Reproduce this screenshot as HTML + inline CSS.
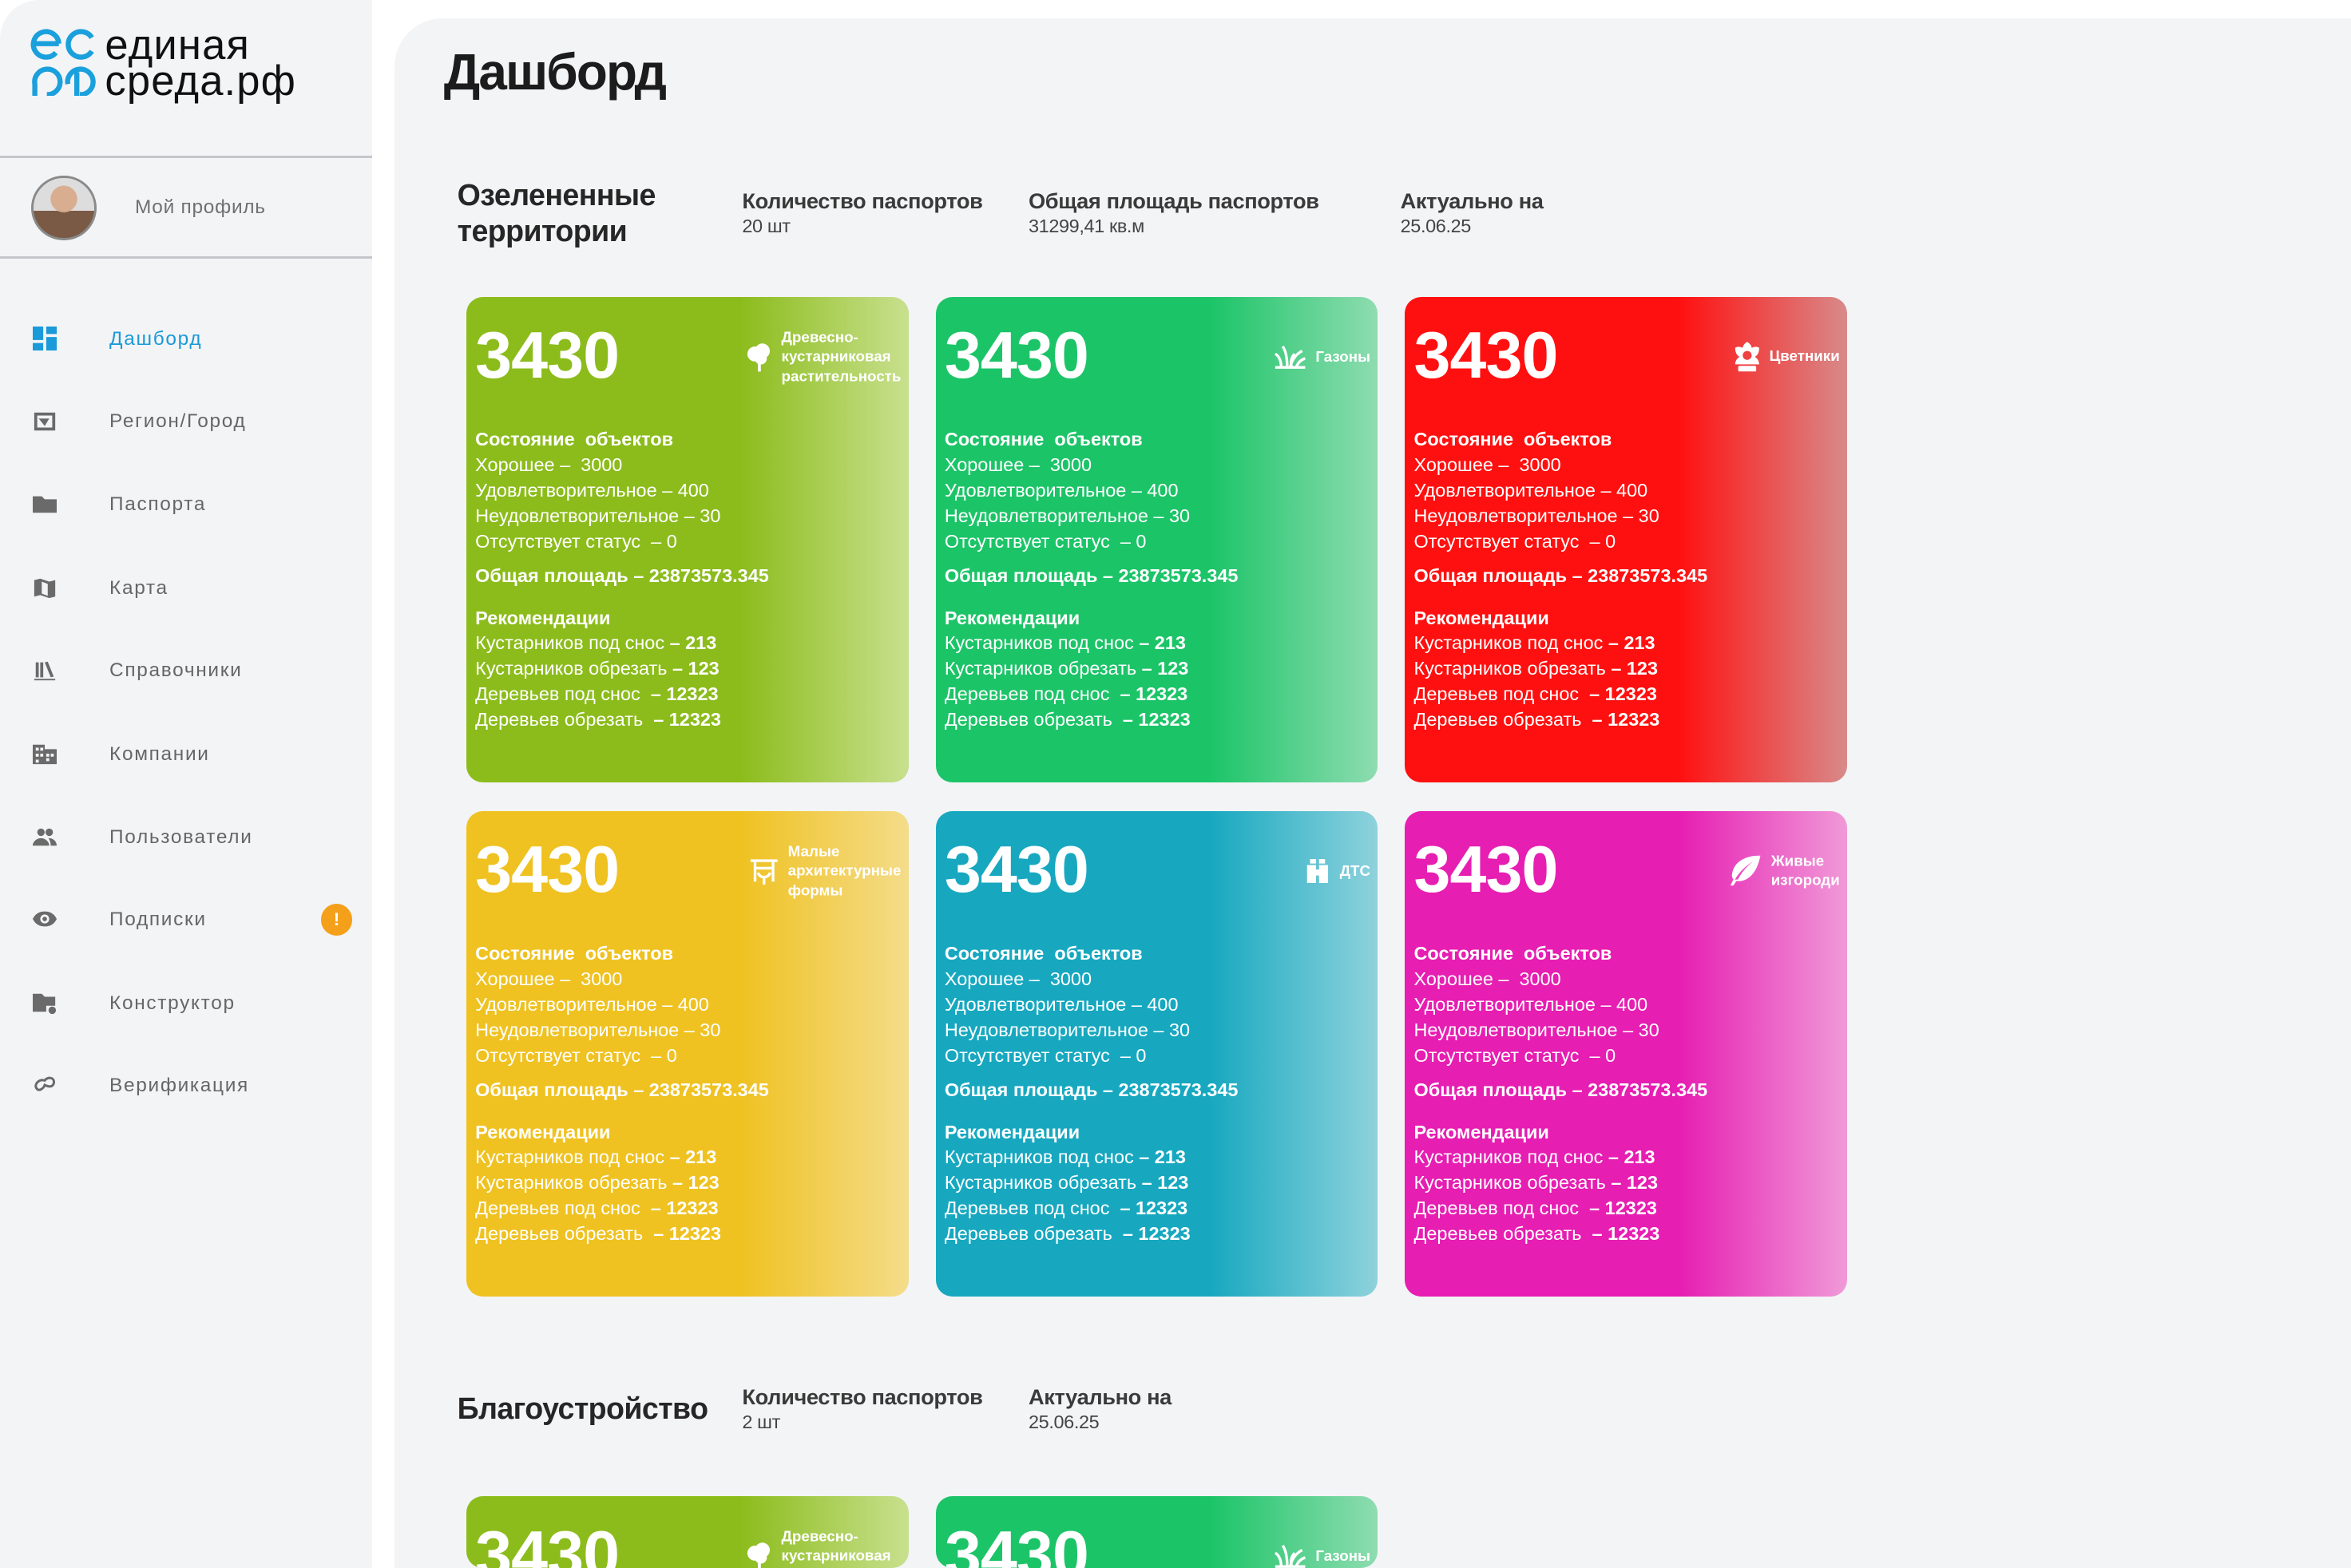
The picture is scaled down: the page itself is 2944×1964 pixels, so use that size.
<!DOCTYPE html>
<html><head><meta charset="utf-8">
<style>
html,body{margin:0;padding:0;background:#fff;}
body{width:2944px;height:1964px;overflow:hidden;font-family:"Liberation Sans","DejaVu Sans",sans-serif;}
#r{zoom:1.877551;width:1568px;height:1046px;position:relative;overflow:hidden;background:#fff;}
.side{position:absolute;left:0;top:0;width:248px;height:1046px;background:#f3f4f6;border-top-left-radius:26px;}
.main{position:absolute;left:263px;top:12px;width:1305px;height:1034px;background:#f3f4f6;border-top-left-radius:32px;}
.logo{position:absolute;left:20px;top:18px;}
.logo .t{position:absolute;left:50px;top:0px;font-size:28px;line-height:24px;color:#111;letter-spacing:0.6px;white-space:nowrap;}
.hr{position:absolute;left:0;width:248px;height:1.5px;background:#c4c6ca;}
.ava{position:absolute;left:21px;top:117px;width:40px;height:40px;border-radius:50%;border:2px solid #8a8a8a;background:radial-gradient(circle at 50% 35%,#d9ad90 0 26%,transparent 28%),linear-gradient(#ddd 0 55%,#7a5a44 55%);overflow:hidden;}
.prof{position:absolute;left:90px;top:131px;font-size:13px;color:#707070;letter-spacing:0.4px;}
.nav{position:absolute;left:0;width:248px;height:20px;}
.nav .ic{position:absolute;left:22px;top:2px;width:16px;height:16px;}
.nav .l{position:absolute;left:73px;top:3px;font-size:13px;color:#666;letter-spacing:0.9px;}
.nav.a .l{color:#1a9ad8;}
.badge{position:absolute;left:214px;top:0;width:21px;height:21px;border-radius:50%;background:#f5a01a;color:#fff;font-size:12px;font-weight:bold;text-align:center;line-height:21px;}
h1{position:absolute;left:296px;top:28px;margin:0;font-size:34px;font-weight:900;color:#1c1c1c;letter-spacing:-1px;}
.sec{position:absolute;font-size:20px;font-weight:bold;color:#262626;line-height:24px;letter-spacing:-0.3px;}
.kv{position:absolute;font-size:14px;color:#3a3a3a;line-height:16px;letter-spacing:-0.2px;}
.kv b{display:block;font-size:14.5px;}
.kv span{font-size:12.5px;color:#444;}
.card{position:absolute;width:295px;height:324px;border-radius:11px;color:#fff;overflow:hidden;}
.card .n{position:absolute;left:6px;top:14px;font-size:44px;font-weight:bold;line-height:50px;letter-spacing:-0.5px;}
.card .cat{position:absolute;right:5px;top:40px;transform:translateY(-50%);font-size:10px;font-weight:bold;line-height:13px;display:flex;align-items:center;gap:6px;}
.card .body{position:absolute;left:6px;top:87px;font-size:12.5px;line-height:17px;white-space:nowrap;}
.card .body b{font-weight:bold;}
.sp{height:6px}
.sp2{height:11px}
</style></head><body><div id="r">
<div class="side">
 <div class="logo">
  <svg width="44" height="46" viewBox="0 0 44 46" fill="none" stroke="#1aa0dc" stroke-width="3.4">
   <path d="M19 11 A8.5 8.5 0 1 0 17 17 M2.5 11 H19"/>
   <path d="M41 7 A8.5 8.5 0 1 0 41 16"/>
   <path d="M3 46 V38 A8.5 8.5 0 1 1 11 45"/>
   <path d="M31 46 V30 M33 45 A8.5 8.5 0 1 0 25 38"/>
  </svg>
  <div class="t">единая<br>среда.рф</div>
 </div>
 <div class="hr" style="top:104px"></div>
 <div class="ava"></div>
 <div class="prof">Мой профиль</div>
 <div class="hr" style="top:171px"></div>

 <div class="nav a" style="top:216px"><svg class="ic" viewBox="0 0 16 16" fill="#1a9ad8"><rect x="0" y="0" width="7" height="9"/><rect x="9" y="0" width="7" height="5"/><rect x="0" y="11" width="7" height="5"/><rect x="9" y="7" width="7" height="9"/></svg><div class="l">Дашборд</div></div>
 <div class="nav" style="top:271px"><svg class="ic" viewBox="0 0 16 16" fill="#6a6a6a"><path d="M1 2h14v12H1z M3 4v8h10V4z"/><path d="M4 6l7 0-3 5z"/></svg><div class="l">Регион/Город</div></div>
 <div class="nav" style="top:326px"><svg class="ic" viewBox="0 0 16 16" fill="#6a6a6a"><path d="M0 3h6l2 2h8v9H0z"/></svg><div class="l">Паспорта</div></div>
 <div class="nav" style="top:382px"><svg class="ic" viewBox="0 0 16 16" fill="#6a6a6a"><path d="M1 3l4-1 6 2 4-1v11l-4 1-6-2-4 1z M6 4v8l4 1.5V5.5z" fill-rule="evenodd"/></svg><div class="l">Карта</div></div>
 <div class="nav" style="top:437px"><svg class="ic" viewBox="0 0 16 16" fill="#6a6a6a"><rect x="2" y="3" width="2" height="10"/><rect x="5" y="3" width="2" height="10"/><path d="M8 3l2-0.5 4 10-2 0.5z"/><rect x="1" y="14" width="14" height="1"/></svg><div class="l">Справочники</div></div>
 <div class="nav" style="top:493px"><svg class="ic" viewBox="0 0 16 16" fill="#6a6a6a"><path d="M0 2h8v3h8v10H0z M2 4v2h2V4z M5 4v2h2V4z M2 8v2h2V8z M5 8v2h2V8z M2 12v2h2v-2z M9 8v2h2V8z M12 8v2h2V8z M9 11v2h2v-2z" fill-rule="evenodd"/></svg><div class="l">Компании</div></div>
 <div class="nav" style="top:548px"><svg class="ic" viewBox="0 0 16 16" fill="#6a6a6a"><circle cx="5.5" cy="5" r="2.5"/><circle cx="11" cy="5" r="2.5"/><path d="M0 14c0-3 3-5 5.5-5s5.5 2 5.5 5z M11 9c2.5 0 5 2 5 5h-4c0-2-0.5-3.5-1.5-5z"/></svg><div class="l">Пользователи</div></div>
 <div class="nav" style="top:603px"><svg class="ic" viewBox="0 0 16 16" fill="#6a6a6a"><path d="M0 8c2-4 5-5 8-5s6 1 8 5c-2 4-5 5-8 5s-6-1-8-5z M8 5a3 3 0 1 0 0.01 0z M8 6.5a1.5 1.5 0 1 1-0.01 0z" fill-rule="evenodd"/></svg><div class="l">Подписки</div><div class="badge">!</div></div>
 <div class="nav" style="top:659px"><svg class="ic" viewBox="0 0 16 16" fill="#6a6a6a"><path d="M0 2h6l2 2h7v6h-6v4H0z"/><circle cx="13" cy="13" r="2.5"/></svg><div class="l">Конструктор</div></div>
 <div class="nav" style="top:714px"><svg class="ic" viewBox="0 0 16 16" fill="none" stroke="#6a6a6a" stroke-width="1.6"><path d="M2 9c0-3 3-5 6-4 2-3 7-2 6 2-1 3-4 2-6 1-1 3-5 5-6 1z"/></svg><div class="l">Верификация</div></div>
</div>

<div class="main"></div>
<h1>Дашборд</h1>

<div class="sec" style="left:305px;top:118px">Озелененные<br>территории</div>
<div class="kv" style="left:495px;top:126px"><b>Количество паспортов</b><span>20 шт</span></div>
<div class="kv" style="left:686px;top:126px"><b>Общая площадь паспортов</b><span>31299,41 кв.м</span></div>
<div class="kv" style="left:934px;top:126px"><b>Актуально на</b><span>25.06.25</span></div>

<div class="sec" style="left:305px;top:928px">Благоустройство</div>
<div class="kv" style="left:495px;top:924px"><b>Количество паспортов</b><span>2 шт</span></div>
<div class="kv" style="left:686px;top:924px"><b>Актуально на</b><span>25.06.25</span></div>

<div id="cards"></div>
<script>
var cards=[
 [311,198,'#8cbc1c','#c8e08e','tree','Древесно-<br>кустарниковая<br>растительность'],
 [624,198,'#1cc468','#8edcb0','grass','Газоны'],
 [937,198,'#ff1010','#d88a8a','flower','Цветники'],
 [311,541,'#efc222','#f4dc8a','maf','Малые<br>архитектурные<br>формы'],
 [624,541,'#17a8c0','#8ed2dc','dts','ДТС'],
 [937,541,'#e61eb2','#f09ad8','leaf','Живые<br>изгороди'],
 [311,998,'#8cbc1c','#c8e08e','tree','Древесно-<br>кустарниковая<br>растительность'],
 [624,998,'#1cc468','#8edcb0','grass','Газоны']
];
var icons={
 tree:'<svg width="18" height="20" viewBox="0 0 18 20" fill="#fff"><circle cx="6" cy="8" r="5"/><circle cx="11" cy="6" r="5"/><circle cx="10" cy="11" r="4"/><rect x="8" y="11" width="2" height="9"/></svg>',
 grass:'<svg width="22" height="16" viewBox="0 0 22 16" fill="none" stroke="#fff" stroke-width="1.8"><path d="M1 15h20 M5 15C5 10 3 7 1 6 M9 15C9 9 8 4 6 1 M11 15c1-5 4-9 8-11 M15 15c1-3 3-5 6-6 M12 15c-1-4 0-7 2-9"/></svg>',
 flower:'<svg width="18" height="20" viewBox="0 0 18 20" fill="#fff"><path d="M9 0c2 1 3 3 3 4 2-1 4-1 5 0 0 3-1 5-3 6 2 1 3 3 3 5H1c0-2 1-4 3-5-2-1-3-3-3-6 1-1 3-1 5 0 0-1 1-3 3-4z M9 6a3 3 0 1 0 0.01 0z" fill-rule="evenodd"/><rect x="3" y="16" width="12" height="4" rx="1"/></svg>',
 maf:'<svg width="20" height="20" viewBox="0 0 20 20" fill="none" stroke="#fff" stroke-width="1.8"><path d="M1 3h18 M4 3v14 M16 3v14 M4 8h12 M6 11c1 4 7 4 8 0 M10 14v5"/></svg>',
 dts:'<svg width="18" height="18" viewBox="0 0 18 18" fill="#fff"><path d="M4 1h4v3H4z M10 1h4v3h-4z M2 5h6v12H2z M10 5h6v12h-6z M7 8h4v4H7z"/></svg>',
 leaf:'<svg width="22" height="20" viewBox="0 0 22 20" fill="#fff"><path d="M21 0C11 0 3 4 2 13c0 2 1 3 1 3L1 20h2l2-3c8 1 14-6 16-17z M4 16c3-5 7-9 12-12-5 4-8 8-10 12z" fill-rule="evenodd"/></svg>'
};
var body='<b>Состояние&nbsp; объектов</b><br>Хорошее –&nbsp; 3000<br>Удовлетворительное – 400<br>Неудовлетворительное – 30<br>Отсутствует статус&nbsp; – 0<div class="sp"></div><b>Общая площадь – 23873573.345</b><div class="sp2"></div><b>Рекомендации</b><br>Кустарников под снос <b>– 213</b><br>Кустарников обрезать <b>– 123</b><br>Деревьев под снос&nbsp; <b>– 12323</b><br>Деревьев обрезать&nbsp; <b>– 12323</b>';
var h='';
cards.forEach(function(c){
 var hh = c[1]+324>1046 ? (1046-c[1]) : 324;
 h+='<div class="card" style="left:'+c[0]+'px;top:'+c[1]+'px;height:'+hh+'px;background:linear-gradient(90deg,'+c[2]+' 0%,'+c[2]+' 62%,'+c[3]+' 100%)"><div class="n">3430</div><div class="cat">'+icons[c[4]]+'<div>'+c[5]+'</div></div><div class="body">'+body+'</div></div>';
});
document.getElementById('cards').innerHTML=h;
</script>
</div></body></html>
